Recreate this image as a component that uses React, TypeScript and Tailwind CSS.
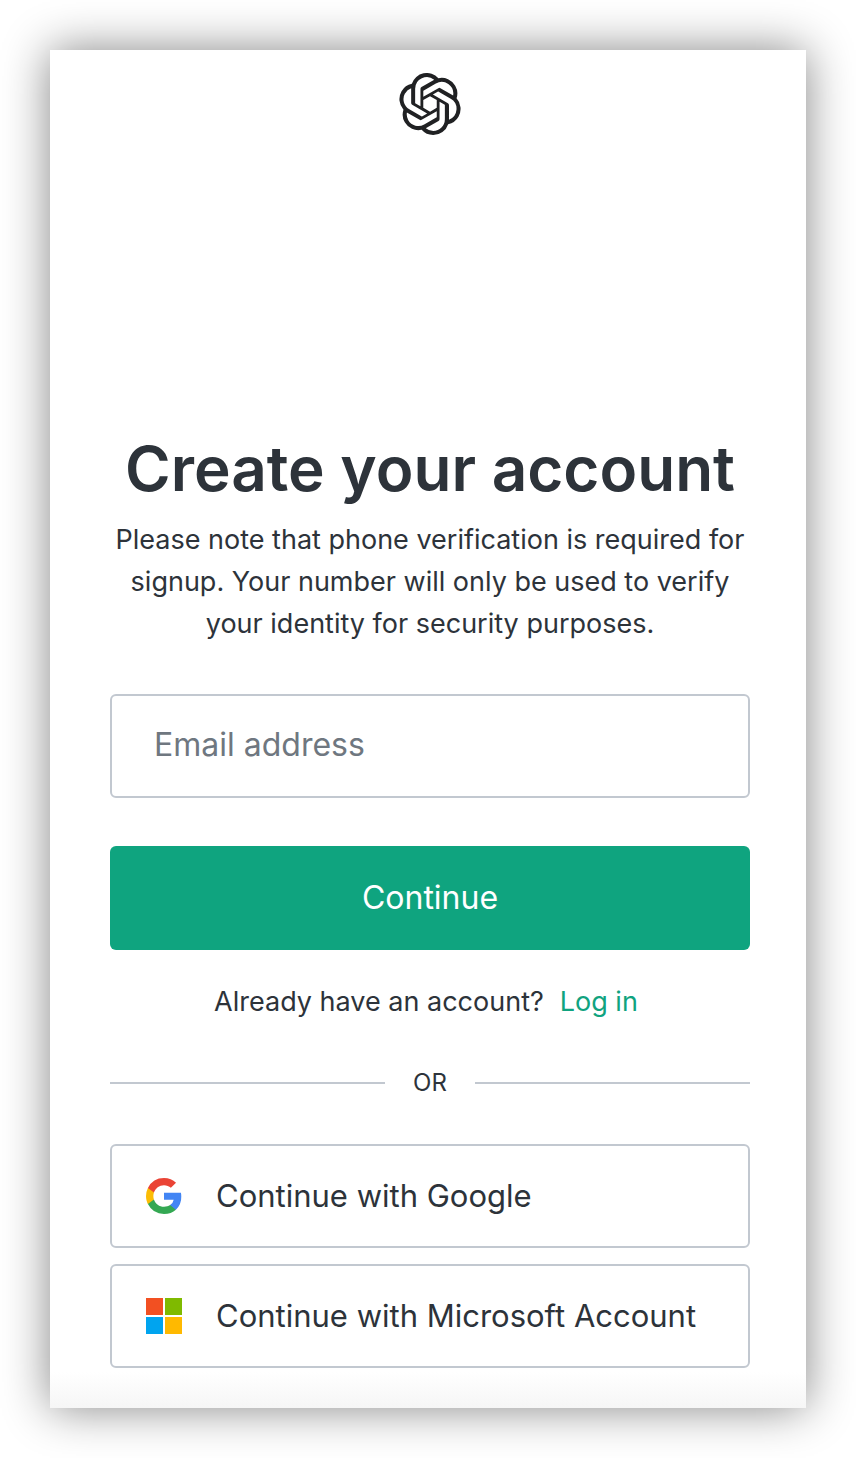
import React, { ReactNode } from 'react';
import { SiOpenai } from 'react-icons/si';

function GoogleIcon() {
  return (
    <svg viewBox="0 0 18 18" className="size-9" aria-hidden="true">
      <path
        fill="#4285F4"
        d="M17.64 9.2c0-.64-.06-1.25-.16-1.84H9v3.48h4.84a4.14 4.14 0 0 1-1.8 2.72v2.26h2.92a8.78 8.78 0 0 0 2.68-6.62z"
      />
      <path
        fill="#34A853"
        d="M9 18c2.43 0 4.47-.8 5.96-2.18l-2.92-2.26c-.8.54-1.84.86-3.04.86-2.34 0-4.33-1.58-5.04-3.71H.96v2.33A9 9 0 0 0 9 18z"
      />
      <path
        fill="#FBBC05"
        d="M3.96 10.71A5.41 5.41 0 0 1 3.68 9c0-.6.1-1.17.28-1.71V4.96H.96A9 9 0 0 0 0 9c0 1.45.35 2.83.96 4.04l3-2.33z"
      />
      <path
        fill="#EA4335"
        d="M9 3.58c1.32 0 2.5.45 3.44 1.35l2.58-2.59C13.46.89 11.43 0 9 0A9 9 0 0 0 .96 4.96l3 2.33C4.67 5.16 6.66 3.58 9 3.58z"
      />
    </svg>
  );
}

function MicrosoftIcon() {
  return (
    <svg viewBox="0 0 36 36" className="size-9" aria-hidden="true">
      <path fill="#F25022" d="M0 0h17v17H0z" />
      <path fill="#7FBA00" d="M19 0h17v17H19z" />
      <path fill="#00A4EF" d="M0 19h17v17H0z" />
      <path fill="#FFB900" d="M19 19h17v17H19z" />
    </svg>
  );
}

interface ProviderButtonProps {
  icon: ReactNode;
  children: ReactNode;
}

function ProviderButton({ icon, children }: ProviderButtonProps) {
  return (
    <button
      type="button"
      className="flex h-[104px] w-full items-center gap-[34px] rounded-md border-2 border-[#c2c8d0] bg-white px-[34px] text-left text-[31px] leading-10 hover:bg-gray-50"
    >
      {icon}
      <span>{children}</span>
    </button>
  );
}

export default function App() {
  return (
    <div className="bg-white p-[50px] font-['Inter',sans-serif] text-[#2d333a]">
      <main className="bg-[linear-gradient(to_top,#f6f6f6,#ffffff_36px)] pt-[23px] pr-14 pb-10 pl-[60px] shadow-[0_0_44px_rgba(0,0,0,0.48)]">
        <header className="flex justify-center">
          <SiOpenai className="size-[62px] text-[#202123]" title="OpenAI" />
        </header>

        <section className="mt-[294px]">
          <h1 className="text-center text-[62px] leading-[80px] font-semibold whitespace-nowrap">
            Create your account
          </h1>
          <p className="mt-[10px] text-center text-[27px] leading-[42px]">
            Please note that phone verification is required for signup. Your number will only be used
            to verify your identity for security purposes.
          </p>

          <form className="mt-[49px]" onSubmit={(e) => e.preventDefault()}>
            <input
              type="email"
              aria-label="Email address"
              placeholder="Email address"
              className="block h-[104px] w-full rounded-md border-2 border-[#c2c8d0] bg-white px-[42px] pb-1 text-[32px] outline-none placeholder:text-[#6f7780] focus:border-[#10a37f]"
            />
            <button
              type="submit"
              className="mt-12 h-[104px] w-full rounded-md bg-[#0fa47f] text-[32px] text-white hover:bg-[#0d8f6f]"
            >
              Continue
            </button>
          </form>

          <p className="mt-8 flex justify-center gap-4 pr-2 text-[27px] leading-10">
            Already have an account?
            <a href="#login" className="text-[#10a37f]">
              Log in
            </a>
          </p>

          <div className="mt-10 flex items-center text-2xl leading-[42px]">
            <span className="h-[2px] flex-1 bg-[#c2c8d0]" />
            <span className="px-7">OR</span>
            <span className="h-[2px] flex-1 bg-[#c2c8d0]" />
          </div>

          <div className="mt-10 flex flex-col gap-4">
            <ProviderButton icon={<GoogleIcon />}>Continue with Google</ProviderButton>
            <ProviderButton icon={<MicrosoftIcon />}>Continue with Microsoft Account</ProviderButton>
          </div>
        </section>
      </main>
    </div>
  );
}
